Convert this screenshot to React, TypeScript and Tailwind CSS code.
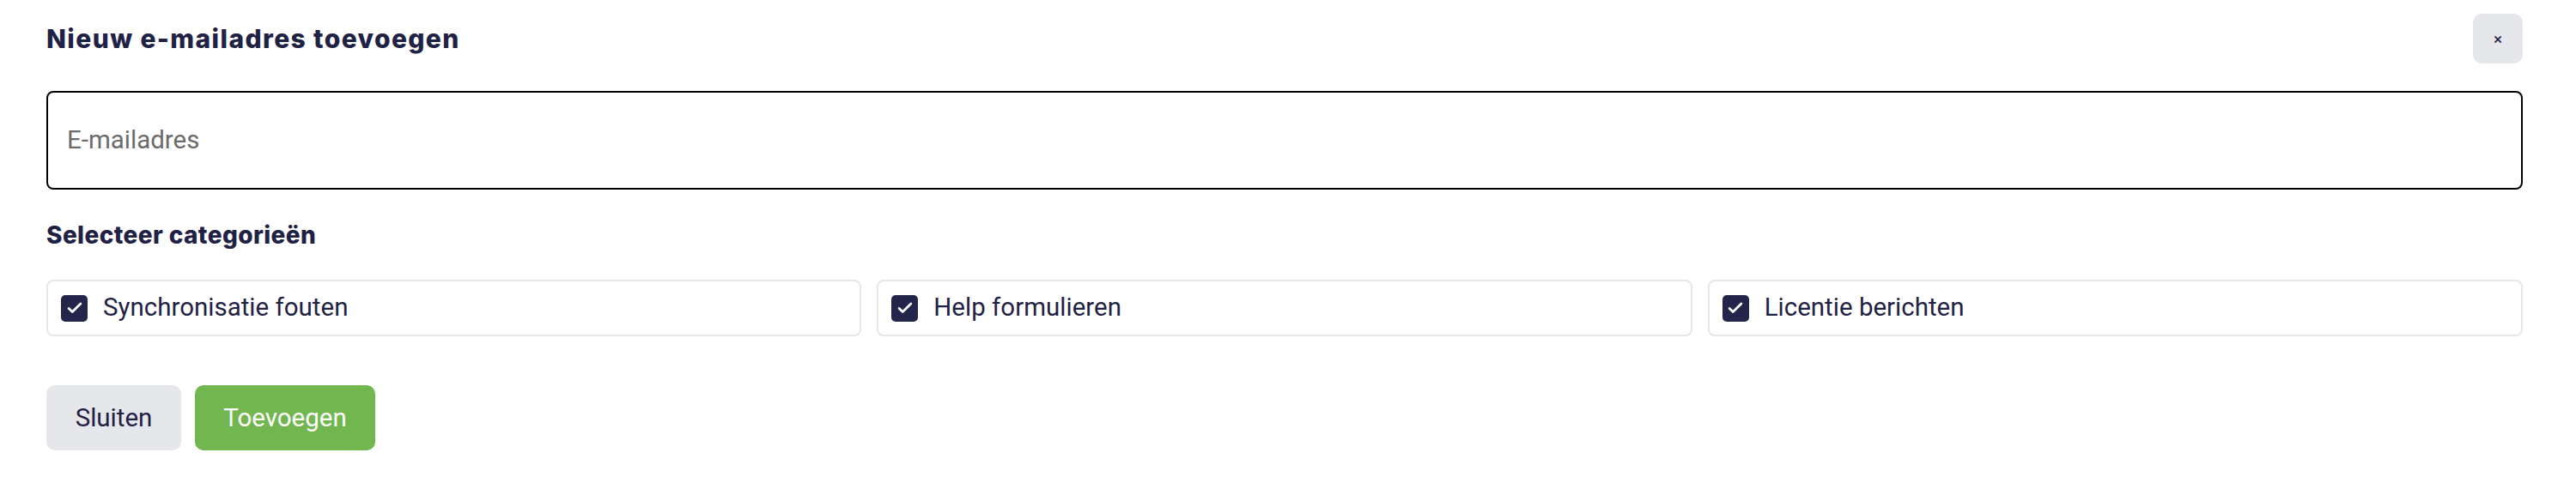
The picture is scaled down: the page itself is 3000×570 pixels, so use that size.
import React from "react";

const navy = "text-[#1f2244]";

function Check({ label }: { label: string }) {
  return (
    <label className="flex h-[66px] items-center gap-[18px] rounded-[8px] border-2 border-[#e6e7eb] bg-white pl-[15px]">
      <span className="flex h-[31px] w-[31px] items-center justify-center rounded-[5px] bg-[#23264a]">
        <svg width="22" height="22" viewBox="0 0 24 24" fill="none">
          <path d="M4.5 12.5l4.5 4.5L19.5 6.5" stroke="white" strokeWidth="3" strokeLinecap="round" strokeLinejoin="round" />
        </svg>
      </span>
      <span className={`text-[29.5px] leading-none ${navy}`}>{label}</span>
    </label>
  );
}

export default function App() {
  return (
    <div className="min-h-[570px] w-[3000px] bg-white font-['Roboto',sans-serif]">
      <div className="ml-[54px] w-[2884px] pt-[16px]">
        <div className="flex h-[58px] items-center justify-between">
          <h1 className={`font-['Inter',sans-serif] text-[30px] font-extrabold tracking-[1.4px] ${navy}`}>Nieuw e-mailadres toevoegen</h1>
          <button className={`flex h-[58px] w-[58px] items-center justify-center rounded-[10px] bg-[#e5e7eb] text-[19px] leading-none ${navy}`}>×</button>
        </div>
        <div className="mt-[32px] flex h-[115px] items-center rounded-[8px] border-2 border-black px-[22px]">
          <span className="text-[29.5px] text-[#6b6b6b]">E-mailadres</span>
        </div>
        <h2 className={`mt-[35px] font-['Inter',sans-serif] text-[28px] leading-[36px] font-extrabold tracking-[0.4px] ${navy}`}>Selecteer categorieën</h2>
        <div className="mt-[34px] grid grid-cols-3 gap-[18px]">
          <Check label="Synchronisatie fouten" />
          <Check label="Help formulieren" />
          <Check label="Licentie berichten" />
        </div>
        <div className="mt-[57px] flex gap-[16px]">
          <button className={`h-[76px] w-[157px] rounded-[10px] bg-[#e5e7eb] text-[29.5px] ${navy}`}>Sluiten</button>
          <button className="h-[76px] w-[210px] rounded-[10px] bg-[#72b650] text-[29.5px] text-white">Toevoegen</button>
        </div>
      </div>
    </div>
  );
}
